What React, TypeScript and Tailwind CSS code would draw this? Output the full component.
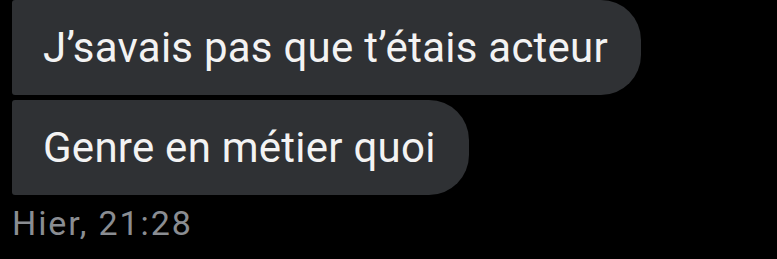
import React from "react";

const Bubble: React.FC<{ text: string }> = ({ text }) => {
  return (
    <div className="self-start h-[95px] flex items-center pl-[31px] pr-[33px] bg-[#2f3134] rounded-l-[3px] rounded-r-[40px]">
      <span className="text-[42px] leading-none tracking-[0.25px] text-[#f3f3f3] whitespace-nowrap">{text}</span>
    </div>
  );
};

const App: React.FC = () => {
  return (
    <div
      className="w-[777px] h-[259px] bg-black overflow-hidden flex flex-col pl-3"
      style={{ fontFamily: "Roboto, 'Liberation Sans', sans-serif" }}
    >
      <div className="flex flex-col gap-[5px]">
        <Bubble text="J’savais pas que t’étais acteur" />
        <Bubble text="Genre en métier quoi" />
      </div>
      <div className="mt-[8px] text-[34px] leading-[40px] tracking-[1.9px] text-[#8a8d92]">Hier, 21:28</div>
    </div>
  );
};

export default App;
